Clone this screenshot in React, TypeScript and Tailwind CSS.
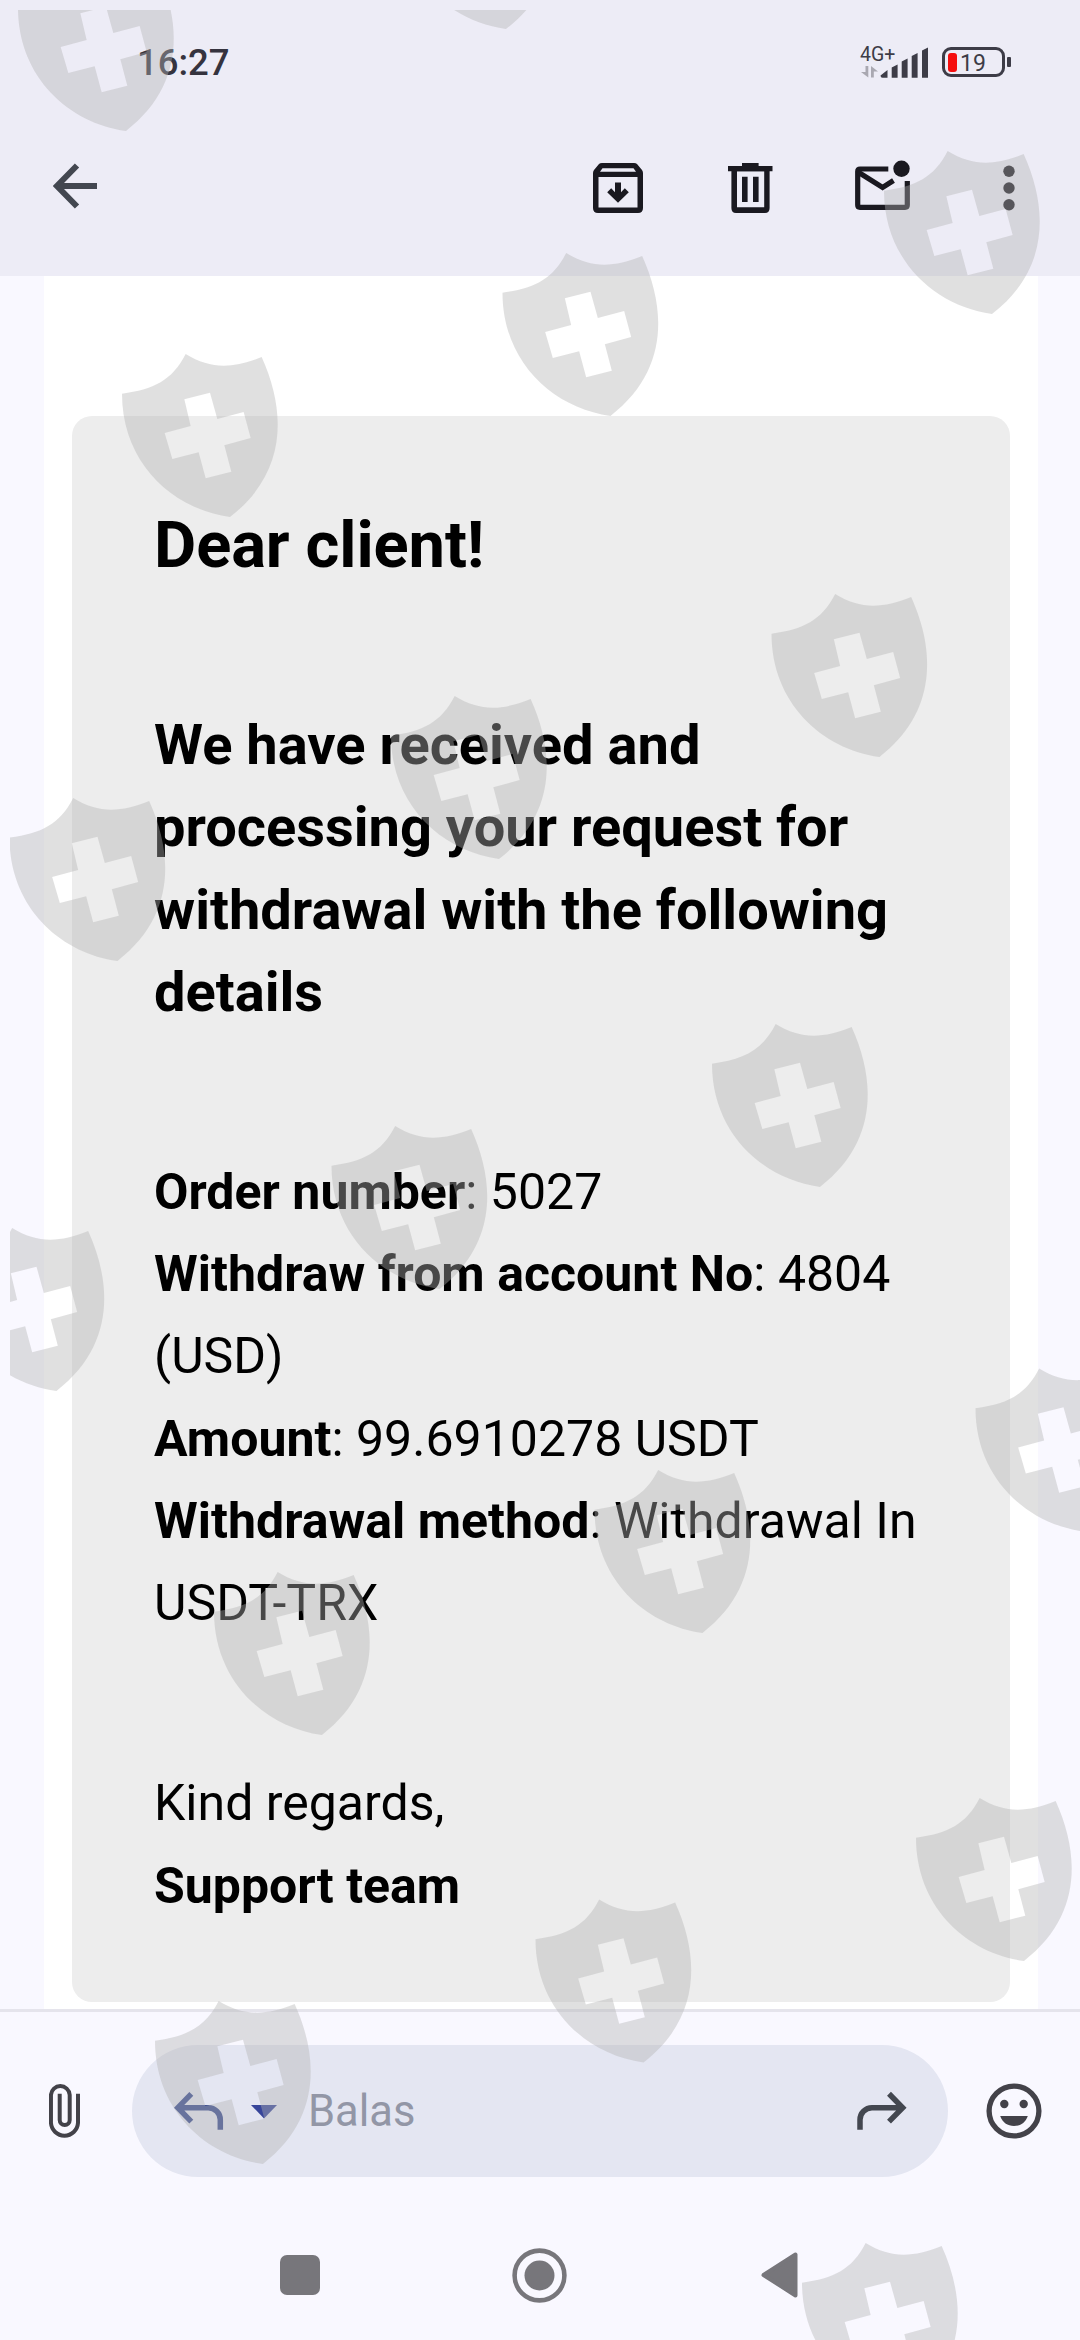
import type { ReactNode } from "react";

const SHIELDS = [
  { x: 398, y: -134 },
  { x: 18, y: -32 },
  { x: 884, y: 151 },
  { x: 502.5, y: 253 },
  { x: 122, y: 354 },
  { x: 771.5, y: 594 },
  { x: 391, y: 696 },
  { x: 9.5, y: 798 },
  { x: 712, y: 1024 },
  { x: 331.5, y: 1126 },
  { x: -51.5, y: 1228 },
  { x: 975.5, y: 1368.5 },
  { x: 594.5, y: 1470 },
  { x: 214, y: 1572 },
  { x: 916, y: 1798 },
  { x: 535.5, y: 1899.5 },
  { x: 155, y: 2001 },
  { x: 802, y: 2243 },
];

function ShieldOverlay() {
  return (
    <div className="pointer-events-none absolute inset-0 overflow-hidden">
      <svg className="h-full w-full" viewBox="0 0 1080 2340" fill="#b2b2b2" fillOpacity="0.405">
        <clipPath id="inset">
          <rect x="10" y="10" width="1070" height="2330" />
        </clipPath>
        <g clipPath="url(#inset)">
          {SHIELDS.map(({ x, y }) => (
            <path
              key={`${x}-${y}`}
              transform={`translate(${x} ${y}) scale(0.3333)`}
              fillRule="evenodd"
              d="M0 119C95 106 150 80 191 0C265 45 330 45 419 9C492 170 498 355 324 489C150 465 0 325 0 119ZM187 136L264 116L286 195L365 174L386 252L307 274L328 353L251 373L230 295L151 315L128 237L206 216Z"
            />
          ))}
        </g>
      </svg>
    </div>
  );
}

function StatusBar() {
  return (
    <div className="flex h-[124px] items-center justify-between pl-[137px] pr-[69px]">
      <span className="mt-[3px] text-[36.5px] font-medium leading-none text-[#35333e]">16:27</span>
      <div className="flex items-center">
        <div className="relative h-[34px] w-[68px]">
          <span className="absolute left-0 top-0 text-[19.5px] leading-none text-[#3d3c47]">4G+</span>
          <svg className="h-full w-full" viewBox="859 45 68 34" fill="#3d3c47">
            <path d="M864.500 66h2.800v11.500l-7.300-5.500h4.500zM870 77.500v-11.500l7 5.500h-4.200v6z" fill="#a9a8b1" />
            <path d="M879.500 75.500l7-5.500v7.700h-5q-2 0-2-2.200zM890.700 67.500l5.900-3v13.200h-5.900zM900.700 61.500l5.900-3v19.200h-5.900zM910.700 56l5.900-3v24.700h-5.900zM921 50.500l6-3v30.200h-6z" />
          </svg>
        </div>
        <div className="ml-[14px] flex h-[30px] w-[63px] items-center rounded-[9px] border-[3.5px] border-[#3d3c47] pl-[3px]">
          <span className="h-[19px] w-[9px] rounded-[3px] bg-[#f50f0f]" />
          <span className="ml-[3px] mt-[2px] text-[23px] leading-none text-[#3d3c47]">19</span>
        </div>
        <span className="ml-[2px] h-[10px] w-[4px] rounded-[1px] bg-[#3d3c47]" />
      </div>
    </div>
  );
}

function Toolbar() {
  return (
    <div className="flex h-[128px] items-center pl-[53px] text-[#1a1920]">
      <svg className="mb-[4px] h-[46px] w-[45px]" viewBox="0 0 45 46" fill="none" stroke="#434750" strokeWidth="6">
        <path d="M24 2.500L4 23L24 43.500M4 23H44" />
      </svg>
      <svg className="ml-[495px] h-[50px] w-[50px]" viewBox="0 0 50 50" fill="currentColor">
        <path
          fillRule="evenodd"
          d="M9 0H41Q43 0 44 1L49 7Q50 8.500 50 10V45Q50 50 45 50H5Q0 50 0 45V10Q0 8.500 1 7L6 1Q7 0 9 0ZM9.500 5.300L7 8.700H43L40.500 5.300ZM5.500 14V44.500H44.500V14Z"
        />
        <path d="M22 19.500H28V29.300L31.800 25.300L35.800 29.200L25 39.800L14.200 29.200L18.200 25.300L22 29.300Z" />
      </svg>
      <svg className="ml-[85px] h-[50px] w-[45px]" viewBox="0 0 45 50" fill="currentColor">
        <path d="M14 0H30.600V3H44.500V8.300H0V3H14Z" />
        <path fillRule="evenodd" d="M3.400 7H41.600V45Q41.600 50 37 50H8Q3.400 50 3.400 45ZM9 8.300V44.300H36.200V8.300Z" />
        <path d="M14 13.700H19.600V39H14ZM25 13.700H30.600V39H25Z" />
      </svg>
      <svg className="mb-[5px] ml-[82px] h-[51px] w-[57px]" viewBox="0 0 57 51" fill="none" stroke="currentColor" strokeWidth="5.2">
        <path d="M33.300 9H5Q2.700 9 2.700 11.500V45Q2.700 47.300 5 47.300H50Q52.300 47.300 52.300 45V21" />
        <path d="M3 12L27.600 27.500L38.500 20.500" />
        <circle cx="46.500" cy="8.700" r="8.200" fill="currentColor" stroke="none" />
      </svg>
      <svg className="ml-[91px] h-[46px] w-[12px]" viewBox="0 0 12 46" fill="#1a1920">
        <circle cx="6" cy="6.300" r="5.700" />
        <circle cx="6" cy="23" r="5.700" />
        <circle cx="6" cy="39.700" r="5.700" />
      </svg>
    </div>
  );
}

function Row({ label, children }: { label: string; children: ReactNode }) {
  return (
    <p>
      <b>{label}</b>: {children}
    </p>
  );
}

function Message() {
  return (
    <main className="flex h-[1733px] flex-col bg-[#f9f8ff] pl-[44px] pr-[42px]">
      <div className="flex-1 bg-white px-[28px] pt-[140px]">
        <article className="h-[1586px] rounded-[20px] bg-[#ededed] pl-[82px] pr-[80px] pt-[74px] text-black">
          <h1 className="text-[65px] font-bold leading-[110px] tracking-[-0.1px]">Dear client!</h1>
          <h2 className="mt-[104px] text-[56px] font-bold leading-[82.4px]">
            We have received and processing your request for withdrawal with the following details
          </h2>
          <div className="mt-[117px] text-[50px] leading-[82.3px] tracking-[0.02px]">
            <Row label="Order number">5027</Row>
            <Row label="Withdraw from account No">4804 (USD)</Row>
            <Row label="Amount">99.6910278 USDT</Row>
            <Row label="Withdrawal method">Withdrawal In USDT-TRX</Row>
          </div>
          <div className="mt-[118px] text-[50px] leading-[82.3px]">
            <p>Kind regards,</p>
            <p className="font-bold">Support team</p>
          </div>
        </article>
      </div>
    </main>
  );
}

function ReplyBar() {
  return (
    <div className="flex h-[203px] items-center border-t-[3px] border-[#e5e4ec] pb-[3px] pl-[49px]">
      <svg className="h-[56px] w-[31px]" viewBox="0 0 31 56" fill="none" stroke="#434249" strokeWidth="4">
        <path d="M29 10.700V39.900A13.550 13.550 0 0 1 1.950 39.900V11.800A9.400 9.400 0 0 1 20.700 11.800V37A5 5 0 0 1 10.700 37V10.700" />
      </svg>
      <div className="ml-[52px] flex h-[132px] w-[816px] items-center rounded-full bg-[#e4e6f2] pl-[42px] pr-[41px]">
        <svg className="h-[40px] w-[50px]" viewBox="0 0 50 40" fill="none" stroke="#37498f" strokeWidth="5.5">
          <path d="M46.300 38.700V28.700a12 12 0 0 0-12-12H4M17.300 2.800L3.800 16.700L17.300 30.600" />
        </svg>
        <svg className="ml-[27px] mt-[2px] h-[14px] w-[26px]" viewBox="0 0 26 14" fill="#37459a">
          <path d="M0 0H26L13 13.500Z" />
        </svg>
        <span className="ml-[31px] mt-[3px] text-[43.5px] leading-none text-[#9296a6]">Balas</span>
        <svg className="ml-auto h-[40px] w-[50px]" viewBox="0 0 50 40" fill="none" stroke="#434750" strokeWidth="5.5">
          <path d="M3 38.700V28.700a12 12 0 0 1 12-12H46M32 2.800L45.700 16.700L32 30.600" />
        </svg>
      </div>
      <svg className="ml-[38px] h-[56px] w-[56px]" viewBox="-28 -28 56 56" fill="#434249">
        <circle r="24.900" fill="none" stroke="#434249" strokeWidth="5.3" />
        <circle cx="-9.700" cy="-7" r="4.200" />
        <circle cx="9.700" cy="-7" r="4.200" />
        <path d="M-13.800 5H13.800C11.500 11.500 6.500 15 0 15S-11.500 11.500-13.800 5Z" />
      </svg>
    </div>
  );
}

function NavBar() {
  return (
    <nav className="flex h-[126px] items-center pl-[280px] text-[#77767b]">
      <span className="h-[40px] w-[40px] rounded-[7px] bg-[#77767b]" />
      <svg className="ml-[192px] h-[55px] w-[55px]" viewBox="0 0 55 55" fill="currentColor">
        <circle cx="27.500" cy="27.500" r="24.900" fill="none" stroke="currentColor" strokeWidth="4.600" />
        <circle cx="27.500" cy="27.500" r="15" />
      </svg>
      <svg className="ml-[193px] h-[48px] w-[38px]" viewBox="0 0 38 48" fill="currentColor" stroke="currentColor" strokeWidth="4" strokeLinejoin="round">
        <path d="M35.500 3.500V44.500L3.500 24Z" />
      </svg>
    </nav>
  );
}

export default function App() {
  return (
    <div className="relative h-[2340px] w-[1080px] overflow-hidden bg-[#f9f8ff] font-['Roboto',sans-serif]">
      <header className="h-[276px] bg-[#edecf6]">
        <StatusBar />
        <Toolbar />
      </header>
      <Message />
      <ReplyBar />
      <NavBar />
      <ShieldOverlay />
    </div>
  );
}
